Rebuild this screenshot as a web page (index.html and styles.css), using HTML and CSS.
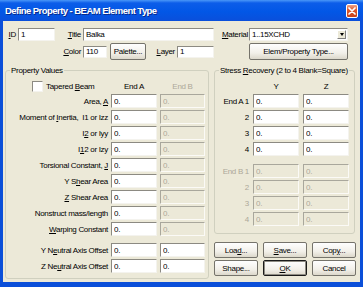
FILE: index.html
```
<!DOCTYPE html>
<html lang="en">
<head>
    <meta charset="UTF-8">
    <title>Define Property - BEAM Element Type</title>
    <link rel="stylesheet" href="styles.css">
</head>
<body>
    <div class="window">
        <div class="titlebar">
            <span class="title">Define Property - BEAM Element Type</span>
            <span class="close">
                <svg width="8" height="8" viewBox="0 0 8 8"><path d="M1 1L7 7M7 1L1 7" stroke="#fff" stroke-width="1.7" stroke-linecap="round"/></svg>
            </span>
        </div>
        <div class="client">
            <div class="row row1">
                <label class="lbl w-id"><u>I</u>D</label>
                <input type="text" class="txt in-id" value="1">
                <label class="lbl w-title"><u>T</u>itle</label>
                <input type="text" class="txt in-title" value="Balka">
                <label class="lbl w-mat"><u>M</u>aterial</label>
                <div class="combo"><span>1..15XCHD</span><span class="arrow"></span></div>
            </div>
            <div class="row row2">
                <label class="lbl w-color"><u>C</u>olor</label>
                <input type="text" class="txt small in-color" value="110">
                <button class="btn btn-palette">Palette...</button>
                <label class="lbl w-layer"><u>L</u>ayer</label>
                <input type="text" class="txt small in-layer" value="1">
                <button class="btn btn-elem">Elem/Property Type...</button>
            </div>

            <div class="groups">
                <fieldset class="group props">
                    <legend>Property Values</legend>
                    <div class="pgrid">
                        <div class="check"><input type="checkbox" class="cb"><span>Tapered <u>B</u>eam</span></div>
                        <div class="head">End A</div>
                        <div class="head off">End B</div>

                        <div class="lbl">Area, <u>A</u></div>
                        <input type="text" class="txt" value="0.">
                        <input type="text" class="txt" value="0." disabled>

                        <div class="lbl">Moment of <u>I</u>nertia,&nbsp; I1 or Izz</div>
                        <input type="text" class="txt" value="0.">
                        <input type="text" class="txt" value="0." disabled>

                        <div class="lbl">I<u>2</u> or Iyy</div>
                        <input type="text" class="txt" value="0.">
                        <input type="text" class="txt" value="0." disabled>

                        <div class="lbl">I<u>1</u>2 or Izy</div>
                        <input type="text" class="txt" value="0.">
                        <input type="text" class="txt" value="0." disabled>

                        <div class="lbl">Torsional Constant, <u>J</u></div>
                        <input type="text" class="txt" value="0.">
                        <input type="text" class="txt" value="0." disabled>

                        <div class="lbl">Y S<u>h</u>ear Area</div>
                        <input type="text" class="txt" value="0.">
                        <input type="text" class="txt" value="0." disabled>

                        <div class="lbl"><u>Z</u> Shear Area</div>
                        <input type="text" class="txt" value="0.">
                        <input type="text" class="txt" value="0." disabled>

                        <div class="lbl">Nonstruct mass/length</div>
                        <input type="text" class="txt" value="0.">
                        <input type="text" class="txt" value="0." disabled>

                        <div class="lbl"><u>W</u>arping Constant</div>
                        <input type="text" class="txt" value="0.">
                        <input type="text" class="txt" value="0." disabled>

                        <div class="spacer sp-neutral"></div>

                        <div class="lbl">Y N<u>e</u>utral Axis Offset</div>
                        <input type="text" class="txt" value="0.">
                        <input type="text" class="txt" value="0.">

                        <div class="lbl">Z Ne<u>u</u>tral Axis Offset</div>
                        <input type="text" class="txt" value="0.">
                        <input type="text" class="txt" value="0.">
                    </div>
                </fieldset>

                <div class="stress-col">
                    <fieldset class="group stress">
                        <legend>Stress <u>R</u>ecovery (2 to 4 Blank=Square)</legend>
                        <div class="sgrid">
                            <div></div>
                            <div class="head">Y</div>
                            <div class="head">Z</div>

                            <div class="lbl">End A 1</div>
                            <input type="text" class="txt" value="0.">
                            <input type="text" class="txt" value="0.">
                            <div class="lbl">2</div>
                            <input type="text" class="txt" value="0.">
                            <input type="text" class="txt" value="0.">
                            <div class="lbl">3</div>
                            <input type="text" class="txt" value="0.">
                            <input type="text" class="txt" value="0.">
                            <div class="lbl">4</div>
                            <input type="text" class="txt" value="0.">
                            <input type="text" class="txt" value="0.">

                            <div class="spacer sp-endb"></div>

                            <div class="lbl off">End B 1</div>
                            <input type="text" class="txt" value="0." disabled>
                            <input type="text" class="txt" value="0." disabled>
                            <div class="lbl off">2</div>
                            <input type="text" class="txt" value="0." disabled>
                            <input type="text" class="txt" value="0." disabled>
                            <div class="lbl off">3</div>
                            <input type="text" class="txt" value="0." disabled>
                            <input type="text" class="txt" value="0." disabled>
                            <div class="lbl off">4</div>
                            <input type="text" class="txt" value="0." disabled>
                            <input type="text" class="txt" value="0." disabled>
                        </div>
                    </fieldset>

                    <div class="actions">
                        <button class="btn">Loa<u>d</u>...</button>
                        <button class="btn"><u>S</u>ave...</button>
                        <button class="btn">Cop<u>y</u>...</button>
                        <button class="btn">Shape...</button>
                        <button class="btn default"><u>O</u>K</button>
                        <button class="btn">Cancel</button>
                    </div>
                </div>
            </div>
        </div>
    </div>
</body>
</html>
```

FILE: styles.css
```
* {
    box-sizing: border-box;
}
body {
    margin: 0;
    font-family: "Liberation Sans", Arial, sans-serif;
    font-size: 8px;
    letter-spacing: -0.3px;
    color: #000;
    background: #fff;
}
.window {
    width: 363px;
    height: 287px;
    display: flex;
    flex-direction: column;
    background: #0b4fd9;
}
.titlebar {
    height: 21px;
    flex: none;
    display: flex;
    align-items: center;
    justify-content: space-between;
    padding: 0 5px;
    background: linear-gradient(#4a97f8 0, #0c5de9 3px, #0257e6 55%, #0a4fdb 100%);
}
.title {
    color: #fff;
    font-weight: bold;
    font-size: 9.5px;
    letter-spacing: -0.55px;
    text-shadow: 1px 1px 0 #0a2a8a;
}
.close {
    width: 12px;
    height: 14px;
    border: 1px solid #fff;
    border-radius: 2px;
    background: linear-gradient(#eba28a, #e05a2c 40%, #c8421a);
    display: flex;
    align-items: center;
    justify-content: center;
}
.client {
    flex: 1;
    margin: 0 3px 5px;
    background: #ece9d8;
    padding: 7px 0 0 2px;
}

/* top rows */
.row {
    display: flex;
    align-items: center;
}
.row1 {
    height: 13px;
}
.row2 {
    height: 17px;
    margin-top: 2px;
}
.lbl {
    text-align: right;
    padding-right: 2px;
    flex: none;
    white-space: nowrap;
}
.w-id { width: 13px; }
.w-title { width: 28px; }
.w-mat { width: 35px; padding-right: 1px; }
.w-color { width: 78px; }
.w-layer { width: 31px; }

.txt {
    font: inherit;
    letter-spacing: inherit;
    color: #000;
    height: 14px;
    width: 100%;
    margin: 0;
    padding: 0 2px;
    border: 1px solid;
    border-color: #8c8a82 #f4f3ee #f4f3ee #8c8a82;
    background: #fff;
    outline: none;
}
.txt:disabled {
    background: #ece9d8;
    color: #aca899;
    border-color: #a9a79c #fbfaf6 #fbfaf6 #a9a79c;
}
.row1 .txt { height: 13px; }
.txt.small { height: 12px; }
.in-id { width: 37px; }
.in-title { width: 131px; }
.in-color { width: 24px; }
.in-layer { width: 37px; }

.combo {
    width: 99px;
    height: 13px;
    display: flex;
    align-items: center;
    padding-left: 2px;
    background: #fff;
    border: 1px solid;
    border-color: #8c8a82 #f4f3ee #f4f3ee #8c8a82;
}
.combo .arrow {
    margin-left: auto;
    margin-right: 1px;
    width: 9px;
    height: 9px;
    display: flex;
    align-items: center;
    justify-content: center;
    background: #ece9d8;
    border: 1px solid;
    border-color: #fff #808080 #808080 #fff;
}
.combo .arrow::after {
    content: "";
    border-left: 2.5px solid transparent;
    border-right: 2.5px solid transparent;
    border-top: 3px solid #000;
}

.btn {
    font: inherit;
    letter-spacing: inherit;
    color: #000;
    height: 17px;
    padding: 0;
    border: 1px solid #75736b;
    border-radius: 2px;
    background: linear-gradient(#fefefe, #f2f0e9 60%, #dcd8cb);
}
.btn-palette {
    width: 36px;
    margin-left: 3px;
}
.btn-elem {
    width: 99px;
    margin-left: 35px;
}

/* group boxes */
.groups {
    display: flex;
    gap: 5px;
    margin-top: 6px;
}
.group {
    margin: 0;
    padding: 6px 3px 0 4px;
    border: 1px solid #d0d0bf;
    border-radius: 3px;
    min-width: 0;
}
.group legend {
    padding: 0 1px;
    line-height: 9px;
}
.props {
    width: 204px;
    height: 213px;
}
.stress-col {
    width: 141px;
    display: flex;
    flex-direction: column;
}
.stress {
    height: 168px;
    padding-right: 5px;
}
.pgrid,
.sgrid {
    display: grid;
    row-gap: 2px;
    align-items: center;
}
.pgrid {
    grid-template-columns: 1fr 46px 45px;
    column-gap: 3px;
}
.sgrid {
    grid-template-columns: 1fr 46px 46px;
    column-gap: 4px;
}
.pgrid .lbl,
.sgrid .lbl {
    padding-right: 0;
}
.head {
    text-align: center;
    height: 11px;
    line-height: 11px;
}
.off {
    color: #aca899;
}
.check {
    display: flex;
    align-items: center;
    height: 11px;
}
.cb {
    appearance: none;
    -webkit-appearance: none;
    width: 11px;
    height: 11px;
    margin: 0 3px 0 22px;
    background: #fff;
    border: 1px solid;
    border-color: #8c8a82 #f4f3ee #f4f3ee #8c8a82;
}
.spacer {
    grid-column: 1 / -1;
}
.sp-neutral { height: 3px; }
.sp-endb { height: 4px; }

/* buttons */
.actions {
    display: grid;
    grid-template-columns: repeat(3, 44px);
    grid-auto-rows: 16px;
    column-gap: 5px;
    row-gap: 2px;
    margin-top: 8px;
}
.actions .btn {
    height: 16px;
}
.btn.default {
    border-color: #1a1a1a;
    box-shadow: inset 0 0 0 1px #8f8d84;
}
```
